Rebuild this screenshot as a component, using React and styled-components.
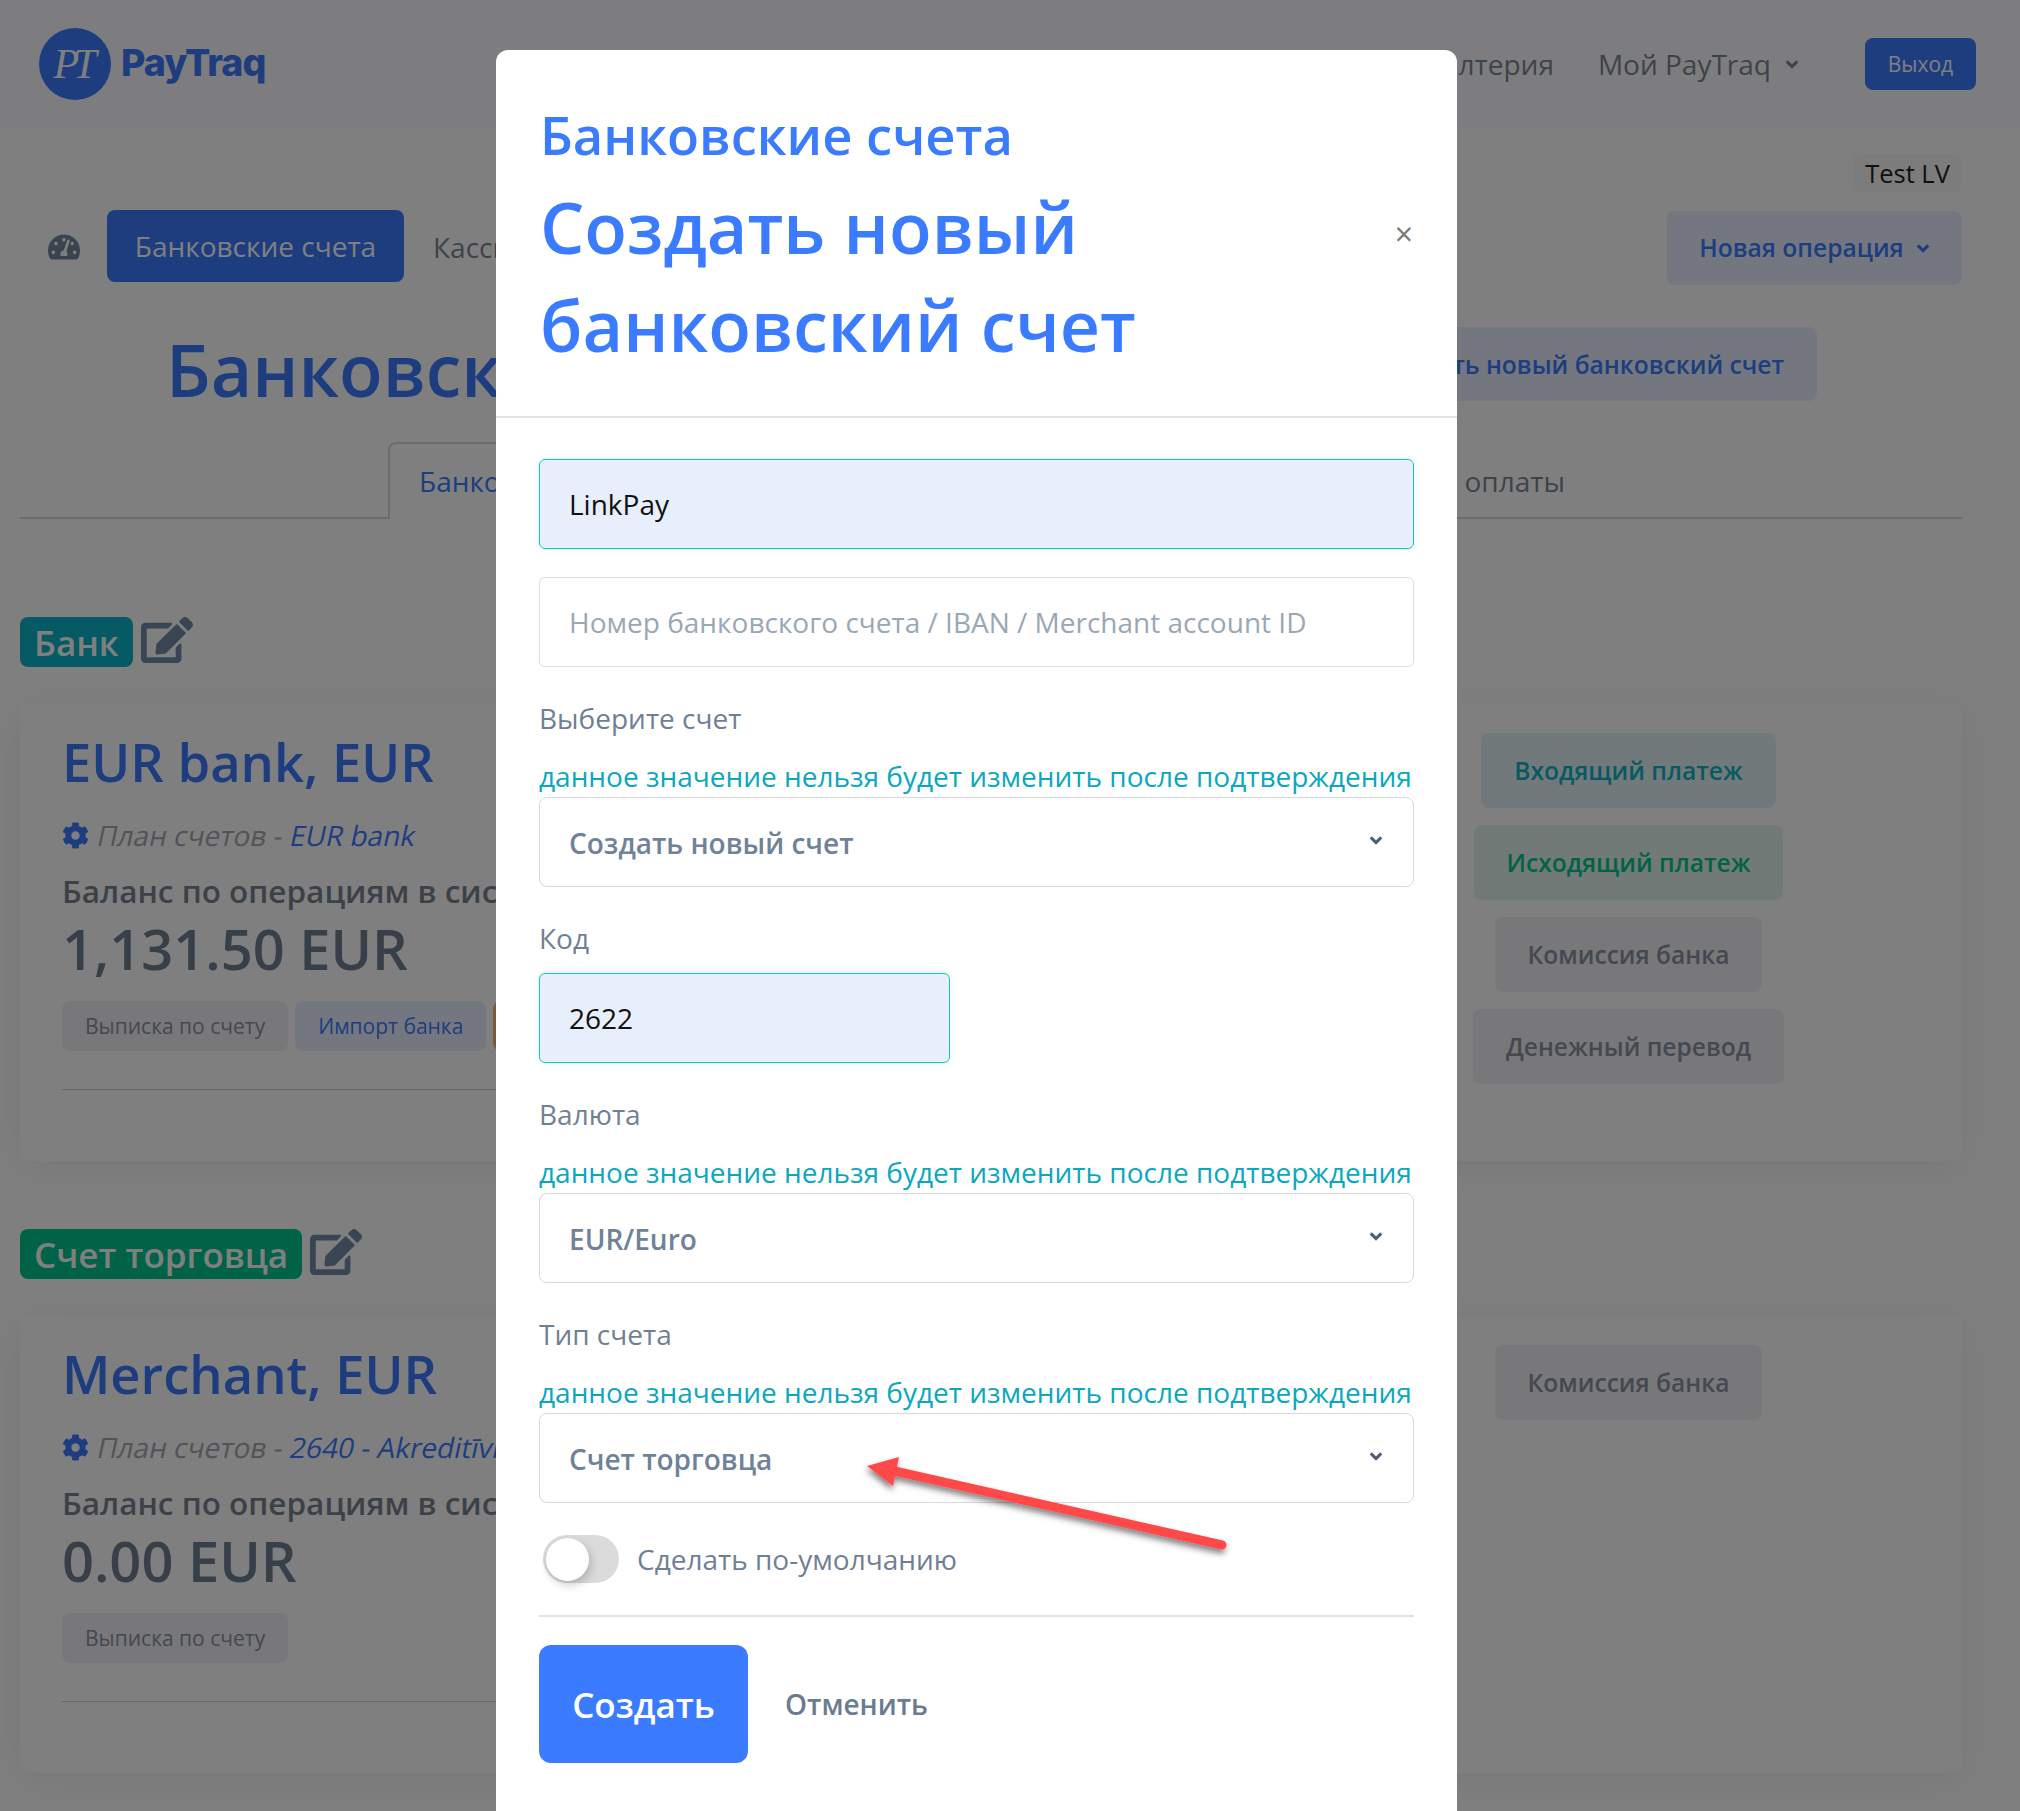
import React from "react";
import styled, { createGlobalStyle } from "styled-components";
import { FaTachometerAlt, FaEdit, FaCog } from "react-icons/fa";

const PRIMARY = "#3a7bff";

function Chevron() {
  return (
    <ChevronIcon viewBox="0 0 16 11">
      <polyline points="2,2.5 8,8.5 14,2.5" />
    </ChevronIcon>
  );
}

function AccountCard({ title, plan, buttons, actions }) {
  return (
    <Card>
      <CardMain>
        <CardTitle>{title}</CardTitle>
        <PlanRow>
          <FaCog size={27} color={PRIMARY} />
          <PlanText>
            План счетов - <PlanLink>{plan}</PlanLink>
          </PlanText>
        </PlanRow>
        <BalanceLabel>Баланс по операциям в системе</BalanceLabel>
        <Amount>{title === "EUR bank, EUR" ? "1,131.50 EUR" : "0.00 EUR"}</Amount>
        <SmallButtons>
          {buttons.map((b) => (
            <SmallButton key={b.label} $kind={b.kind}>
              {b.label}
            </SmallButton>
          ))}
        </SmallButtons>
        <CardDivider />
      </CardMain>
      <CardActions>
        {actions.map((a) => (
          <ActionButton key={a.label} $kind={a.kind}>
            {a.label}
          </ActionButton>
        ))}
      </CardActions>
    </Card>
  );
}

function SelectField({ label, value }) {
  return (
    <>
      <FieldLabel>{label}</FieldLabel>
      <HelpText>данное значение нельзя будет изменить после подтверждения</HelpText>
      <SelectBox>
        <span>{value}</span>
        <Chevron />
      </SelectBox>
    </>
  );
}

export default function App() {
  return (
    <>
      <GlobalStyle />
      <Header>
        <Logo>
          <LogoCircle>PT</LogoCircle>
          <LogoWord>PayTraq</LogoWord>
        </Logo>
        <MenuItem>Бухгалтерия</MenuItem>
        <MenuItem>
          Мой PayTraq <Chevron />
        </MenuItem>
        <LogoutButton>Выход</LogoutButton>
      </Header>
      <Main>
        <CompanyRow>
          <CompanyTag>Test LV</CompanyTag>
        </CompanyRow>
        <NavRow>
          <FaTachometerAlt size={32} color="#74889f" />
          <NavPill>Банковские счета</NavPill>
          <NavLink>Кассы</NavLink>
          <NewOperation>
            Новая операция <Chevron />
          </NewOperation>
        </NavRow>
        <HeadingRow>
          <PageTitle>Банковские счета</PageTitle>
          <CreateAccountButton>Создать новый банковский счет</CreateAccountButton>
        </HeadingRow>
        <Tabs>
          <Tab $active>Банковские счета</Tab>
          <Tab>Кассы</Tab>
          <Tab>Способы оплаты</Tab>
        </Tabs>

        <SectionHead>
          <SectionTag $color="#0bb4c6">Банк</SectionTag>
          <EditIcon size={52} />
        </SectionHead>
        <AccountCard
          title="EUR bank, EUR"
          plan="EUR bank"
          buttons={[
            { label: "Выписка по счету" },
            { label: "Импорт банка", kind: "blue" },
            { label: "Удалить", kind: "orange" },
          ]}
          actions={[
            { label: "Входящий платеж", kind: "teal" },
            { label: "Исходящий платеж", kind: "green" },
            { label: "Комиссия банка" },
            { label: "Денежный перевод" },
          ]}
        />

        <SectionHead $spaced>
          <SectionTag $color="#00c78f">Счет торговца</SectionTag>
          <EditIcon size={52} />
        </SectionHead>
        <AccountCard
          title="Merchant, EUR"
          plan="2640 - Akreditīvi"
          buttons={[{ label: "Выписка по счету" }]}
          actions={[{ label: "Комиссия банка" }]}
        />
      </Main>

      <Overlay>
        <Modal>
          <ModalHead>
            <ModalTitles>
              <ModalSubtitle>Банковские счета</ModalSubtitle>
              <ModalTitle>Создать новый банковский счет</ModalTitle>
            </ModalTitles>
            <CloseMark>×</CloseMark>
          </ModalHead>
          <ModalBody>
            <TextInput $filled readOnly value="LinkPay" />
            <TextInput $gap placeholder="Номер банковского счета / IBAN / Merchant account ID" />
            <SelectField label="Выберите счет" value="Создать новый счет" />
            <FieldLabel $tight>Код</FieldLabel>
            <TextInput $filled $short readOnly value="2622" />
            <SelectField label="Валюта" value="EUR/Euro" />
            <SelectField label="Тип счета" value="Счет торговца" />
            <SwitchRow>
              <SwitchTrack>
                <SwitchKnob />
              </SwitchTrack>
              <SwitchLabel>Сделать по-умолчанию</SwitchLabel>
            </SwitchRow>
            <BodyDivider />
            <ModalActions>
              <SubmitButton>Создать</SubmitButton>
              <CancelButton>Отменить</CancelButton>
            </ModalActions>
          </ModalBody>
        </Modal>
        <ArrowMark viewBox="0 0 2020 1811">
          <defs>
            <filter id="arrowShadow" x="-10%" y="-30%" width="120%" height="170%">
              <feDropShadow dx="-1" dy="4" stdDeviation="3" floodColor="#000" floodOpacity="0.5" />
            </filter>
          </defs>
          <g filter="url(#arrowShadow)" fill="#ff4848">
            <path d="M1222 1545 L890 1470" stroke="#ff4848" strokeWidth="9" strokeLinecap="round" />
            <path d="M867 1466 L899 1457 L893 1486 Z" />
          </g>
        </ArrowMark>
      </Overlay>
    </>
  );
}

const GlobalStyle = createGlobalStyle`
  html, body {
    margin: 0;
    height: 1811px;
    overflow: hidden;
    background: #fff;
    font-family: "Open Sans", "Noto Sans", sans-serif;
    color: #7a8796;
  }
  * { box-sizing: border-box; }
`;

const ChevronIcon = styled.svg`
  width: 14px;
  height: 10px;
  flex: none;
  fill: none;
  stroke: currentColor;
  stroke-width: 3.6;
`;

const Header = styled.header`
  height: 128px;
  background: #fafbff;
  display: flex;
  align-items: center;
  padding: 0 44px 0 39px;
`;

const Logo = styled.div`
  display: flex;
  align-items: center;
  gap: 10px;
  margin-right: auto;
`;

const LogoCircle = styled.div`
  width: 72px;
  height: 72px;
  border-radius: 50%;
  background: ${PRIMARY};
  color: #fff;
  display: flex;
  align-items: center;
  justify-content: center;
  font: italic 42px "Liberation Serif", serif;
  letter-spacing: -6px;
  padding-right: 6px;
`;

const LogoWord = styled.div`
  margin-top: -4px;
  font: 800 37.5px Inter, sans-serif;
  letter-spacing: -1px;
  color: ${PRIMARY};
`;

const MenuItem = styled.div`
  font-size: 28px;
  display: flex;
  align-items: center;
  gap: 14px;
  margin-right: 44px;
  & + & {
    margin-right: 66px;
  }
`;

const LogoutButton = styled.div`
  width: 111px;
  height: 52px;
  background: ${PRIMARY};
  color: #fff;
  border-radius: 8px;
  font-size: 21px;
  display: flex;
  align-items: center;
  justify-content: center;
`;

const Main = styled.main`
  padding: 26px 58px 0 20px;
`;

const CompanyRow = styled.div`
  display: flex;
  justify-content: flex-end;
`;

const CompanyTag = styled.div`
  height: 38px;
  width: 109px;
  border-radius: 8px;
  background: #f8f8f8;
  color: #222;
  font-size: 25.5px;
  display: flex;
  align-items: center;
  justify-content: center;
`;

const NavRow = styled.div`
  display: flex;
  align-items: center;
  height: 75px;
  margin-top: 17px;
  padding-left: 28px;
`;

const NavPill = styled.div`
  height: 72px;
  width: 297px;
  margin: -2px 0 0 27px;
  background: ${PRIMARY};
  color: #fff;
  border-radius: 8px;
  font-size: 28px;
  display: flex;
  align-items: center;
  justify-content: center;
`;

const NavLink = styled.div`
  font-size: 28px;
  margin-left: 29px;
`;

const NewOperation = styled.div`
  margin: 2px 0 0 auto;
  width: 295px;
  height: 74px;
  background: #e8efff;
  color: ${PRIMARY};
  font-size: 24.6px;
  font-weight: 600;
  border-radius: 8px;
  display: flex;
  align-items: center;
  justify-content: center;
  gap: 12px;
`;

const HeadingRow = styled.div`
  display: flex;
  align-items: center;
  justify-content: space-between;
  height: 74px;
  margin-top: 43px;
  padding: 0 145px 0 146px;
`;

const PageTitle = styled.h1`
  margin: 11px 0 0;
  font-size: 71.5px;
  line-height: 72px;
  font-weight: 600;
  color: ${PRIMARY};
  white-space: nowrap;
`;

const CreateAccountButton = styled.div`
  height: 74px;
  padding: 0 33px;
  background: #e8efff;
  color: ${PRIMARY};
  font-size: 24.6px;
  font-weight: 600;
  border-radius: 8px;
  display: flex;
  align-items: center;
  white-space: nowrap;
`;

const Tabs = styled.div`
  display: flex;
  justify-content: space-between;
  height: 77px;
  margin-top: 41px;
  padding: 0 366px 0 368px;
  border-bottom: 2px solid #d8d8d8;
`;

const Tab = styled.div`
  padding: 0 29px 2px;
  font-size: 28px;
  display: flex;
  align-items: center;
  height: 77px;
  color: ${(p) => (p.$active ? PRIMARY : "#7a8796")};
  background: ${(p) => (p.$active ? "#fff" : "transparent")};
  border: 2px solid ${(p) => (p.$active ? "#d8d8d8" : "transparent")};
  border-bottom: none;
  border-radius: 8px 8px 0 0;
`;

const SectionHead = styled.div`
  display: flex;
  align-items: flex-start;
  gap: 8px;
  margin-top: ${(p) => (p.$spaced ? "68px" : "98px")};
`;

const EditIcon = styled(FaEdit)`
  color: #748aa6;
  margin-top: -3px;
`;

const SectionTag = styled.div`
  height: 50px;
  padding: 0 14px;
  background: ${(p) => p.$color};
  color: #fff;
  font-size: 35px;
  font-weight: 600;
  border-radius: 8px;
  display: flex;
  align-items: center;
`;

const Card = styled.section`
  height: 458px;
  margin-top: 36px;
  background: #fff;
  border-radius: 8px;
  box-shadow: 0 6px 40px rgba(0, 0, 0, 0.07);
  padding: 24px 178px 0 42px;
  display: flex;
  justify-content: space-between;
  overflow: hidden;
`;

const CardMain = styled.div`
  width: 1000px;
`;

const CardTitle = styled.h2`
  margin: 0;
  font-size: 52.5px;
  line-height: 70px;
  font-weight: 600;
  color: ${PRIMARY};
`;

const PlanRow = styled.div`
  display: flex;
  align-items: center;
  gap: 9px;
  margin-top: 20px;
  height: 36px;
`;

// the original slants the upright face instead of using a real italic
const PlanText = styled.div`
  font-size: 28px;
  color: #a4a8b0;
  white-space: nowrap;
  transform: skewX(-12deg);
`;

const PlanLink = styled.span`
  color: ${PRIMARY};
`;

const BalanceLabel = styled.div`
  margin-top: 18px;
  font-size: 31.5px;
  line-height: 40px;
  font-weight: 600;
  color: #78838f;
  white-space: nowrap;
`;

const Amount = styled.div`
  margin-top: 2px;
  font-size: 56px;
  line-height: 70px;
  font-weight: 600;
  color: #6e7e90;
`;

const SmallButtons = styled.div`
  display: flex;
  gap: 7px;
  margin-top: 18px;
`;

const buttonColors = {
  blue: ["#e8efff", PRIMARY],
  orange: ["#f8b070", "#fff"],
  teal: ["#e4f2f5", "#0bb4c6"],
  green: ["#e4f4ef", "#00c78f"],
};

const SmallButton = styled.div`
  height: 50px;
  padding: 0 23px;
  font-size: 21px;
  border-radius: 8px;
  background: ${(p) => (buttonColors[p.$kind] || ["#f0f1f5"])[0]};
  color: ${(p) => (buttonColors[p.$kind] || [0, "#8890a0"])[1]};
  display: flex;
  align-items: center;
`;

const CardDivider = styled.div`
  height: 1px;
  background: #cfcfcf;
  margin-top: 38px;
`;

const CardActions = styled.div`
  width: 311px;
  margin-top: 6px;
  display: flex;
  flex-direction: column;
  align-items: center;
  gap: 17px;
`;

const ActionButton = styled.div`
  height: 75px;
  padding: 0 33px;
  font-size: 24.6px;
  font-weight: 600;
  border-radius: 8px;
  background: ${(p) => (buttonColors[p.$kind] || ["#f0f1f5"])[0]};
  color: ${(p) => (buttonColors[p.$kind] || [0, "#8890a0"])[1]};
  display: flex;
  align-items: center;
  white-space: nowrap;
`;

const Overlay = styled.div`
  position: fixed;
  inset: 0;
  background: rgba(0, 0, 0, 0.5);
  padding: 50px 0 0 496px;
  overflow: hidden;
`;

const Modal = styled.div`
  width: 961px;
  height: 1800px;
  background: #fff;
  border-radius: 12px 12px 0 0;
`;

const ModalHead = styled.div`
  height: 368px;
  padding: 50px 43px 0 44px;
  border-bottom: 2px solid #e2e2e2;
  display: flex;
  align-items: flex-start;
`;

const ModalTitles = styled.div`
  flex: 1;
`;

const ModalSubtitle = styled.div`
  font-size: 52.5px;
  line-height: 70px;
  font-weight: 600;
  color: ${PRIMARY};
  white-space: nowrap;
`;

const ModalTitle = styled.div`
  margin-top: 8px;
  font-size: 70px;
  line-height: 98px;
  font-weight: 600;
  max-width: 700px;
  color: ${PRIMARY};
`;

const CloseMark = styled.div`
  font-size: 32px;
  color: #7a7a7a;
  margin: 112px 1px 0 0;
`;

const ModalBody = styled.div`
  padding: 41px 43px 0 43px;
`;

const TextInput = styled.input`
  display: block;
  width: ${(p) => (p.$short ? "411px" : "100%")};
  height: 90px;
  margin-top: ${(p) => (p.$gap ? "28px" : "0")};
  padding: 0 29px;
  font: 400 28px "Open Sans", sans-serif;
  color: #111;
  background: ${(p) => (p.$filled ? "#e8effc" : "#fff")};
  border: 1px solid ${(p) => (p.$filled ? "#1bc9ae" : "#dedede")};
  border-radius: 6px;
  box-shadow: ${(p) => (p.$filled ? "0 0 10px rgba(0, 209, 178, 0.12)" : "none")};
  outline: none;
  &::placeholder {
    color: #9aa7b5;
    opacity: 1;
  }
`;

const FieldLabel = styled.div`
  margin-top: 33px;
  font-size: 28px;
  line-height: 36px;
  color: #6f8094;
  margin-bottom: ${(p) => (p.$tight ? "17px" : "0")};
`;

const HelpText = styled.div`
  margin-top: 22px;
  font-size: 28px;
  line-height: 36px;
  color: #0aa7bd;
  white-space: nowrap;
`;

const SelectBox = styled.div`
  height: 90px;
  margin-top: 3px;
  padding: 2px 30px 0 29px;
  border: 1px solid #d9d9d9;
  border-radius: 8px;
  font-size: 28px;
  font-weight: 600;
  color: #6f8299;
  display: flex;
  align-items: center;
  justify-content: space-between;
  svg {
    margin-top: -6px;
    color: #4f6178;
  }
`;

const SwitchRow = styled.div`
  display: flex;
  align-items: center;
  gap: 18px;
  margin-top: 32px;
  padding-left: 4px;
`;

const SwitchTrack = styled.div`
  width: 76px;
  height: 48px;
  border-radius: 24px;
  background: #dbdbdb;
  display: flex;
  align-items: center;
  padding-left: 3px;
`;

const SwitchKnob = styled.div`
  width: 43px;
  height: 43px;
  border-radius: 50%;
  background: #fff;
  box-shadow: 2px 4px 10px rgba(0, 0, 0, 0.2);
`;

const SwitchLabel = styled.div`
  font-size: 28px;
  color: #6f8094;
`;

const BodyDivider = styled.div`
  height: 2px;
  background: #e2e2e2;
  margin-top: 32px;
`;

const ModalActions = styled.div`
  display: flex;
  align-items: center;
  margin-top: 28px;
`;

const SubmitButton = styled.div`
  width: 209px;
  height: 118px;
  background: ${PRIMARY};
  color: #fff;
  border-radius: 12px;
  font-size: 35px;
  font-weight: 600;
  display: flex;
  align-items: center;
  justify-content: center;
`;

const CancelButton = styled.div`
  margin-left: 37px;
  font-size: 28px;
  font-weight: 600;
  color: #6a7c91;
`;

const ArrowMark = styled.svg`
  position: absolute;
  inset: 0;
  width: 2020px;
  height: 1811px;
  pointer-events: none;
`;
